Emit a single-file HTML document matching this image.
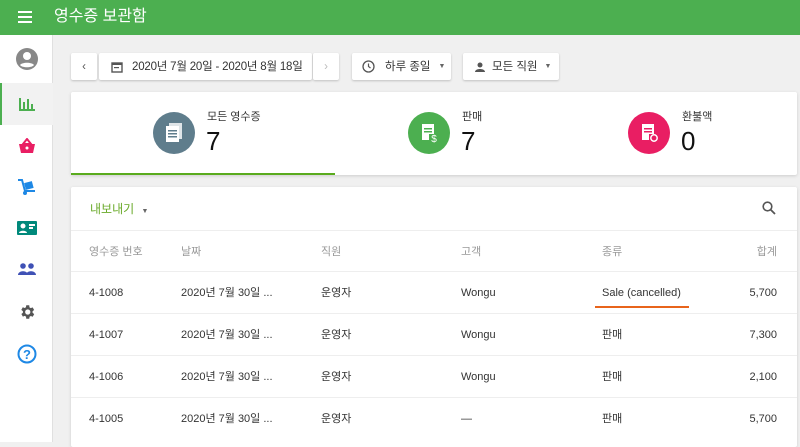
<!DOCTYPE html><html><head><meta charset="utf-8"><style>
*{box-sizing:border-box;margin:0;padding:0}
body{width:800px;height:442px;overflow:hidden;background:#f0f0f0;font-family:"Liberation Sans","Noto Sans CJK KR",sans-serif;position:relative;color:#212121}
.hdr{position:absolute;left:0;top:0;width:800px;height:35px;background:#4caf50;color:#fff}
.side{position:absolute;left:0;top:35px;width:53px;height:407px;background:#fff;border-right:1px solid #e0e0e0}
.ic{position:absolute;left:0;width:53px;display:flex;justify-content:center}
.btn{position:absolute;background:#fff;box-shadow:0 1px 2px rgba(0,0,0,.2);border-radius:2px;display:flex;align-items:center;font-size:11.5px;color:#333;white-space:nowrap;line-height:14px}
.card{position:absolute;background:#fff;box-shadow:0 1px 3px rgba(0,0,0,.15);border-radius:2px}
.circ{position:absolute;width:42px;height:42px;border-radius:50%;display:flex;align-items:center;justify-content:center}
.lbl{position:absolute;font-size:11px;color:#333;line-height:14px}
.num{position:absolute;font-size:26px;color:#111;line-height:30px}
.row{position:absolute;left:71px;width:726px;height:42px;border-top:1px solid #eee;font-size:11px;color:#333}
.row span{position:absolute;top:14px;line-height:14px;height:14px;white-space:nowrap}
.th span{color:#999}
</style></head><body>
<div class="hdr">
<svg style="position:absolute;left:18px;top:11px" width="14" height="12"><rect y="0" width="14" height="2" fill="#fff"/><rect y="5" width="14" height="2" fill="#fff"/><rect y="10" width="14" height="2" fill="#fff"/></svg>
<div style="position:absolute;left:54px;top:7px;font-size:16px;line-height:20px">영수증 보관함</div></div>
<div class="side">
<div class="ic" style="top:12px"><svg width="24" height="24" viewBox="0 0 24 24"><circle cx="12" cy="12" r="11" fill="#888"/><circle cx="12" cy="9" r="4" fill="#fff"/><path d="M5 18c2-3 12-3 14 0c-2 3-12 3-14 0z" fill="#fff"/></svg></div>
<div style="position:absolute;left:0;top:48px;width:53px;height:42px;background:#f2f2f2;border-left:2px solid #4caf50"></div>
<div class="ic" style="top:61px"><svg width="18" height="16"><rect x="1" y="2" width="2" height="13" fill="#4caf50"/><rect x="5" y="6" width="2" height="8" fill="#4caf50"/><rect x="9" y="3" width="2" height="11" fill="#4caf50"/><rect x="13" y="8" width="2" height="6" fill="#4caf50"/><rect x="1" y="13" width="16" height="2" fill="#4caf50"/></svg></div>
<div class="ic" style="top:103px"><svg width="18" height="16"><path d="M5 6L9 1L13 6z" fill="none" stroke="#e91e63" stroke-width="2"/><path d="M1 6h16l-2 9H3z" fill="#e91e63"/><circle cx="9" cy="10" r="1.5" fill="#fff"/></svg></div>
<div class="ic" style="top:143px"><svg width="20" height="18"><path d="M1 2l4 0l3 11h10" fill="none" stroke="#1e88e5" stroke-width="2"/><rect x="8" y="4" width="8" height="7" fill="#1e88e5" transform="rotate(-15 12 8)"/><circle cx="8" cy="15" r="2" fill="#1e88e5"/></svg></div>
<div class="ic" style="top:186px"><svg width="20" height="14"><rect width="20" height="14" rx="1" fill="#00897b"/><circle cx="6" cy="5" r="2.5" fill="#fff"/><path d="M2 12c0-3 8-3 8 0z" fill="#fff"/><rect x="12" y="3" width="6" height="2" fill="#fff"/><rect x="12" y="6" width="4" height="2" fill="#fff"/></svg></div>
<div class="ic" style="top:228px"><svg width="18" height="12"><circle cx="5" cy="3" r="2.8" fill="#3f51b5"/><circle cx="13" cy="3" r="2.8" fill="#3f51b5"/><path d="M0 12c0-5 10-5 10 0zM8 12c0-5 10-5 10 0z" fill="#3f51b5"/></svg></div>
<div class="ic" style="top:268px"><svg width="18" height="18" viewBox="0 0 24 24"><path fill="#555" d="M19.4 13a7.5 7.5 0 000-2l2.1-1.6-2-3.5-2.5 1a7 7 0 00-1.7-1L15 3h-4l-.4 2.7a7 7 0 00-1.7 1l-2.5-1-2 3.5L6.6 11a7.5 7.5 0 000 2l-2.1 1.6 2 3.5 2.5-1a7 7 0 001.7 1L11 21h4l.4-2.7a7 7 0 001.7-1l2.5 1 2-3.5zM13 15.5a3.5 3.5 0 110-7 3.5 3.5 0 010 7z"/></svg></div>
<div class="ic" style="top:309px"><svg width="20" height="20"><circle cx="10" cy="10" r="8.5" fill="none" stroke="#1e88e5" stroke-width="2"/><text x="10" y="15" font-size="13" font-weight="bold" fill="#1e88e5" text-anchor="middle" font-family="Liberation Sans">?</text></svg></div>
</div>
<div class="btn" style="left:71px;top:53px;width:26px;height:27px;justify-content:center;color:#555">‹</div>
<div class="btn" style="left:99px;top:53px;width:213px;height:27px;padding-left:12px"><svg width="12" height="12"><rect x="1" y="2" width="10" height="9" fill="none" stroke="#555" stroke-width="1.4"/><rect x="1" y="2" width="10" height="2" fill="#555"/><rect x="3" y="6" width="5" height="1.2" fill="#555"/></svg><span style="margin-left:9px;letter-spacing:-0.2px">2020년 7월 20일 - 2020년 8월 18일</span></div>
<div class="btn" style="left:313px;top:53px;width:26px;height:27px;justify-content:center;color:#bbb">›</div>
<div class="btn" style="left:352px;top:53px;width:99px;height:27px;padding-left:10px"><svg width="13" height="13"><circle cx="6.5" cy="6.5" r="5.5" fill="none" stroke="#555" stroke-width="1.3"/><path d="M6.5 3.5v3l2 1.5" fill="none" stroke="#555" stroke-width="1.2"/></svg><span style="margin-left:10px">하루 종일</span><span style="margin-left:8px;font-size:7px;color:#666">▼</span></div>
<div class="btn" style="left:463px;top:53px;width:96px;height:27px;padding-left:12px"><svg width="10" height="10"><circle cx="5" cy="3" r="2.5" fill="#555"/><path d="M0 10c0-4 10-4 10 0z" fill="#555"/></svg><span style="margin-left:7px">모든 직원</span><span style="margin-left:7px;font-size:7px;color:#666">▼</span></div>
<div class="card" style="left:71px;top:92px;width:726px;height:83px">
<div style="position:absolute;left:0;bottom:0;width:264px;height:2px;background:#5aab1e"></div>
<div class="circ" style="left:82px;top:20px;background:#5f7d8c"><svg width="20" height="22"><rect x="5" y="1" width="13" height="16" fill="#fff" opacity=".8"/><rect x="2" y="4" width="13" height="16" fill="#fff"/><rect x="4" y="8" width="9" height="1.5" fill="#5f7d8c"/><rect x="4" y="11" width="9" height="1.5" fill="#5f7d8c"/><rect x="4" y="14" width="9" height="1.5" fill="#5f7d8c"/></svg></div>
<div class="lbl" style="left:136px;top:18px">모든 영수증</div><div class="num" style="left:135px;top:34px">7</div>
<div class="circ" style="left:337px;top:20px;background:#4caf50"><svg width="20" height="22"><path d="M3 2h12v10H3z" fill="#fff"/><path d="M3 12h7v6H3z" fill="#fff"/><rect x="5" y="6" width="8" height="1.5" fill="#4caf50"/><rect x="5" y="9" width="8" height="1.5" fill="#4caf50"/><text x="15" y="20" font-size="10" fill="#fff" text-anchor="middle" font-family="Liberation Sans">$</text></svg></div>
<div class="lbl" style="left:391px;top:18px">판매</div><div class="num" style="left:390px;top:34px">7</div>
<div class="circ" style="left:557px;top:20px;background:#e91e63"><svg width="20" height="22"><path d="M3 2h12v10H3z" fill="#fff"/><path d="M3 12h7v6H3z" fill="#fff"/><rect x="5" y="6" width="8" height="1.5" fill="#e91e63"/><rect x="5" y="9" width="8" height="1.5" fill="#e91e63"/><circle cx="15" cy="16" r="3.2" fill="none" stroke="#fff" stroke-width="1.5"/></svg></div>
<div class="lbl" style="left:611px;top:18px">환불액</div><div class="num" style="left:610px;top:34px">0</div>
</div>
<div class="card" style="left:71px;top:187px;width:726px;height:260px">
<div style="position:absolute;left:19px;top:15px;font-size:12px;color:#6aaa2a;line-height:14px">내보내기 <span style="font-size:7px;color:#666;margin-left:4px">▼</span></div>
<svg style="position:absolute;left:691px;top:14px" width="14" height="14"><circle cx="5.5" cy="5.5" r="4.3" fill="none" stroke="#555" stroke-width="1.6"/><path d="M8.5 8.5l4.5 4.5" stroke="#555" stroke-width="1.8"/></svg>
</div>
<div class="row th" style="top:230px;border-top:1px solid #eee"><span style="left:18px">영수증 번호</span><span style="left:110px">날짜</span><span style="left:250px">직원</span><span style="left:390px">고객</span><span style="left:531px">종류</span><span style="right:20px">합계</span></div>
<div class="row" style="top:271px"><span style="left:18px">4-1008</span><span style="left:110px">2020년 7월 30일 ...</span><span style="left:250px">운영자</span><span style="left:390px">Wongu</span><span style="left:531px">Sale (cancelled)</span><div style="position:absolute;left:524px;top:34px;width:94px;height:2px;background:#e8641b"></div><span style="right:20px">5,700</span></div>
<div class="row" style="top:313px"><span style="left:18px">4-1007</span><span style="left:110px">2020년 7월 30일 ...</span><span style="left:250px">운영자</span><span style="left:390px">Wongu</span><span style="left:531px">판매</span><span style="right:20px">7,300</span></div>
<div class="row" style="top:355px"><span style="left:18px">4-1006</span><span style="left:110px">2020년 7월 30일 ...</span><span style="left:250px">운영자</span><span style="left:390px">Wongu</span><span style="left:531px">판매</span><span style="right:20px">2,100</span></div>
<div class="row" style="top:397px"><span style="left:18px">4-1005</span><span style="left:110px">2020년 7월 30일 ...</span><span style="left:250px">운영자</span><span style="left:390px">—</span><span style="left:531px">판매</span><span style="right:20px">5,700</span></div>
</body></html>
